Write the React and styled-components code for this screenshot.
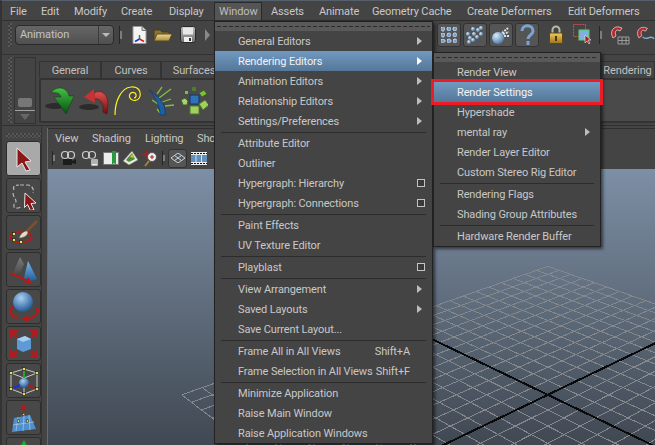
import React from 'react'
import styled, { createGlobalStyle, css } from 'styled-components'

const Global = createGlobalStyle`
  html, body { margin: 0; padding: 0; background: #444; }
  * { box-sizing: border-box; }
`

const Screen = styled.div`
  position: relative;
  width: 655px;
  height: 445px;
  overflow: hidden;
  display: flex;
  flex-direction: column;
  background: #444;
  border-left: 2px solid #333;
  border-top: 1px solid #55606c;
  font-family: Roboto, "Liberation Sans", Arial, sans-serif;
  font-size: 11px;
  letter-spacing: -0.12px;
  color: #c8c8c8;
`

const MenuBar = styled.div`
  height: 20px;
  flex: none;
  display: flex;
  align-items: center;
  padding-left: 8px;
  border-bottom: 1px solid #2f2f2f;
`
const MenuTitle = styled.div`
  flex: none;
  width: ${p => p.$w}px;
  height: 18px;
  line-height: 19px;
  white-space: nowrap;
  ${p => p.$open && css`
    background: #555;
    border: 1px solid #2a2a2a;
    border-bottom: 0;
    padding-left: 4px;
    margin-right: 9px;
    line-height: 18px;
    color: #bdbdbd;
  `}
`

const Grip = styled.div`
  flex: none;
  width: ${p => p.$w}px;
  height: ${p => p.$h}px;
  background: repeating-conic-gradient(#585858 0 25%, #3e3e3e 0 50%) 0 0 / 4px 4px;
`

const StatusLine = styled.div`
  height: 34px;
  flex: none;
  display: flex;
  align-items: center;
  padding: 0 0 6px 6px;
  border-bottom: 1px solid #333;
`
const ModeSelect = styled.div`
  width: 99px;
  height: 20px;
  margin-left: 3px;
  flex: none;
  display: flex;
  border: 1px solid #2b2b2b;
  border-radius: 4px;
  background: linear-gradient(#666, #505050);
  color: #c4c4c4;
  line-height: 18px;
  padding-left: 4px;
`
const ModeLabel = styled.span`
  flex: 1;
`
const ModeArrow = styled.span`
  width: 15px;
  border-left: 1px solid #3a3a3a;
  display: flex;
  align-items: center;
  justify-content: center;
  &::after {
    content: "";
    border-left: 4px solid transparent;
    border-right: 4px solid transparent;
    border-top: 4px solid #bbb;
  }
`
const BarHandle = styled.span`
  flex: none;
  width: 3px;
  height: ${p => p.$h || 18}px;
  margin: 0 ${p => p.$mx ?? 5}px;
  background: linear-gradient(#444 0 30%, #7d7d7d 30% 70%, #444 70%);
  border-left: 1px solid #262626;
`
const StatusLeft = styled.div`
  display: flex;
  align-items: center;
`
const StatusRight = styled.div`
  display: flex;
  align-items: center;
  margin-left: auto;
`
const IconSlot = styled.span`
  flex: none;
  display: flex;
  align-items: center;
  justify-content: center;
  margin-left: ${p => p.$ml || 0}px;
  width: ${p => p.$w || 20}px;
  height: ${p => p.$h || 20}px;
  ${p => p.$framed && css`
    border: 1px solid #333;
    border-radius: 3px;
    background: #555;
  `}
`
const MoreArrow = styled.span`
  margin-left: 8px;
  border-top: 6px solid transparent;
  border-bottom: 6px solid transparent;
  border-left: 5px solid #888;
`

const ShelfArea = styled.div`
  height: 71px;
  flex: none;
  display: flex;
  padding: 2px 0 0 6px;
  border-bottom: 1px solid #2f2f2f;
`
const ShelfControl = styled.div`
  width: 22px;
  height: 67px;
  margin-left: 2px;
  flex: none;
  display: flex;
  flex-direction: column;
  align-items: center;
  justify-content: flex-end;
  border: 1px solid #333;
`
const ShelfKnob = styled.div`
  width: 14px;
  height: 9px;
  border-radius: 2px;
  background: #777;
  margin-bottom: 3px;
`
const ShelfDown = styled.div`
  width: 100%;
  height: 13px;
  border-top: 1px solid #a0a0a0;
  display: flex;
  justify-content: center;
  padding-top: 3px;
  &::after {
    content: "";
    height: 0;
    border-left: 5px solid transparent;
    border-right: 5px solid transparent;
    border-top: 6px solid #666;
  }
`
const ShelfMain = styled.div`
  flex: 1;
  min-width: 0;
  margin-left: 3px;
  padding-top: 4px;
`
const TabRow = styled.div`
  display: flex;
  height: 17px;
`
const Tab = styled.div`
  width: ${p => p.$w}px;
  flex: none;
  text-align: center;
  line-height: 17px;
  padding-left: ${p => p.$pl || 0}px;
  border: 1px solid #333;
  border-bottom: 0;
  color: #c0c0c0;
  white-space: nowrap;
  ${p => p.$end && 'margin-left: auto;'}
`
const ShelfIcons = styled.div`
  height: 45px;
  display: flex;
  align-items: center;
  gap: 5px;
  padding-left: 3px;
  border: 2px solid #333;
  border-right: 0;
  border-radius: 3px 0 0 3px;
  background: #4a4a4a;
`

const Body = styled.div`
  flex: 1;
  min-height: 0;
  display: flex;
`
const ToolBox = styled.div`
  width: 40px;
  flex: none;
  padding: 7px 0 0 4px;
  display: flex;
  flex-direction: column;
  gap: 2px;
  border-right: 1px solid #333;
`
const ToolGrip = styled(Grip)`
  margin-bottom: 1px;
`
const ToolButton = styled.div`
  width: 35px;
  height: 35px;
  flex: none;
  display: flex;
  align-items: center;
  justify-content: center;
  border: 1px solid #2e2e2e;
  border-radius: 3px;
  background: ${p => (p.$on ? '#a9a9a9' : '#484848')};
`
const Panel = styled.div`
  flex: 1;
  min-width: 0;
  margin: 2px 0 0 5px;
  display: flex;
  flex-direction: column;
  border-left: 1px solid #6b6b6b;
`
const PanelMenu = styled.div`
  height: 19px;
  flex: none;
  display: flex;
  align-items: center;
  padding: 1px 0 0 7px;
  border-top: 1px solid #2f2f2f;
`
const PanelTitle = styled.span`
  flex: none;
  width: ${p => p.$w}px;
  white-space: nowrap;
`
const PanelBar = styled.div`
  height: 22px;
  flex: none;
  display: flex;
  align-items: center;
  gap: 3px;
  padding-left: 2px;
`
const Viewport = styled.div`
  flex: 1;
  min-height: 0;
  background: linear-gradient(#7d8fa5, #404852);
`
const GridSvg = styled.svg`
  display: block;
  width: 100%;
  height: 100%;
`

/* menus float over the rest of the window */
const Menu = styled.div`
  position: absolute;
  display: flex;
  flex-direction: column;
  background: #444;
  border: 1px solid #222;
  box-shadow: 2px 2px 3px rgba(0, 0, 0, 0.55);
  color: #c8c8c8;
`
const WindowMenu = styled(Menu)`
  left: 212px;
  top: 20px;
  width: 219px;
`
const RenderMenu = styled(Menu)`
  left: 431px;
  top: 51px;
  width: 168px;
`
const TearOff = styled.div`
  height: 9px;
  flex: none;
  padding: 4px 2px 0;
  background: #595959;
  &::after {
    content: "";
    display: block;
    height: 1px;
    background: repeating-linear-gradient(90deg, #2b2b2b 0 4px, transparent 4px 6px);
  }
`
const Row = styled.div`
  position: relative;
  height: 20px;
  flex: none;
  display: flex;
  align-items: center;
  padding: 0 7px 0 23px;
  white-space: nowrap;
  ${p => p.$active && css`
    background: linear-gradient(#7199c0, #557799);
    color: #f2f2f2;
  `}
`
const RowLabel = styled.span`
  flex: 1;
`
const Shortcut = styled.span`
  margin-right: 15px;
`
const SubArrow = styled.span`
  margin-right: 3px;
  border-top: 4px solid transparent;
  border-bottom: 4px solid transparent;
  border-left: 5px solid ${p => (p.$active ? '#fff' : '#bdbdbd')};
`
const OptionBox = styled.span`
  width: 8px;
  height: 8px;
  border: 1px solid #c4c4c4;
  background: #3a3a3a;
`
const Divider = styled.div`
  height: 2px;
  flex: none;
  margin: 0 6px;
  border-bottom: 1px solid #2c2c2c;
  border-top: 1px solid transparent;
`
const Callout = styled.span`
  position: absolute;
  inset: -3px -3px -3px -3px;
  border: 3px solid #ed1c24;
`

const Grad = ({ id, a, b }) => (
  <linearGradient id={id} x1="0" y1="0" x2="0" y2="1">
    <stop offset="0" stopColor={a} />
    <stop offset="1" stopColor={b} />
  </linearGradient>
)

const NewSceneIcon = () => (
  <svg width="15" height="18" viewBox="0 0 15 18">
    <path d="M1 0.5h9l4 4v13H1z" fill="#f4f4f4" stroke="#999" />
    <path d="M10 0.5v4h4" fill="#ccc" stroke="#777" />
    <path d="M7.5 9v4" stroke="#1a9a2a" strokeWidth="1.5" />
    <path d="M7.5 13L3 15.5" stroke="#2030d0" strokeWidth="1.5" />
    <path d="M7.5 13l4.5 2.5" stroke="#d02020" strokeWidth="1.5" />
  </svg>
)
const FolderIcon = () => (
  <svg width="20" height="16" viewBox="0 0 20 16">
    <defs><Grad id="fold" a="#f0dc96" b="#a88a3e" /></defs>
    <path d="M1 14V3h6l2 2h7v9z" fill="#8a7334" stroke="#4a3c18" />
    <path d="M1 14l3-7h15l-3 7z" fill="url(#fold)" stroke="#5c4a1e" />
  </svg>
)
const SaveIcon = () => (
  <svg width="16" height="17" viewBox="0 0 16 17">
    <defs><Grad id="disk" a="#bcbcbc" b="#707070" /></defs>
    <rect x="0.5" y="0.5" width="15" height="16" rx="2" fill="url(#disk)" stroke="#2a2a2a" />
    <rect x="3" y="1.5" width="10" height="7" fill="#e8e8e8" />
    <rect x="4" y="11" width="8" height="5" fill="#eee" />
    <rect x="9" y="12" width="2" height="3" fill="#333" />
  </svg>
)
const GraphIcon = () => (
  <svg width="20" height="20" viewBox="0 0 20 20" fill="none">
    <rect x="4" y="4" width="12" height="12" stroke="#b5c4d8" strokeDasharray="2 1" />
    <path d="M4 10h12M10 4v12" stroke="#8ea3bd" strokeDasharray="2 1" />
    {[[4, 4], [16, 4], [4, 16], [16, 16], [10, 10], [10, 4], [4, 10], [16, 10], [10, 16]].map(([x, y]) => (
      <rect key={x + '-' + y} x={x - 1.5} y={y - 1.5} width="3" height="3" fill="#6f9fd8" stroke="#dfe8f2" strokeWidth=".5" />
    ))}
  </svg>
)
const ParticlesIcon = () => (
  <svg width="20" height="20" viewBox="0 0 20 20">
    <defs>
      <radialGradient id="ball" cx=".35" cy=".3" r=".8">
        <stop offset="0" stopColor="#dcecfa" />
        <stop offset="1" stopColor="#3f6f9f" />
      </radialGradient>
    </defs>
    {[[5, 13], [9, 9], [13, 5], [16, 3], [3, 9], [8, 4], [12, 12], [16, 9], [8, 15], [4, 17]].map(([x, y]) => (
      <circle key={x + '-' + y} cx={x} cy={y} r="2" fill="url(#ball)" />
    ))}
  </svg>
)
const FluidIcon = () => (
  <svg width="20" height="20" viewBox="0 0 20 20">
    <circle cx="7" cy="13" r="6" fill="url(#ball)" />
    <path d="M11 8l6-5M12 9l6-2M13 11l5 0" stroke="#d7e4f0" strokeWidth="2" strokeDasharray="2 1" />
  </svg>
)
const HelpIcon = () => (
  <svg width="20" height="22" viewBox="0 0 20 22">
    <path d="M5 7c0-7 11-7 11 0 0 4-5 4-5 8M11 17v4" fill="none" stroke="#7aa4d4" strokeWidth="3" />
  </svg>
)
const LockIcon = () => (
  <svg width="14" height="19" viewBox="0 0 14 19">
    <defs><Grad id="lock" a="#f0cc60" b="#9c7418" /></defs>
    <path d="M3.5 8V5a3.5 3.5 0 0 1 7 0v3" fill="none" stroke="#b7b7a8" strokeWidth="2" />
    <rect x="0.5" y="8" width="13" height="10.5" rx="1" fill="url(#lock)" stroke="#5e4610" />
    <rect x="6" y="11" width="2" height="5" fill="#4a3608" />
  </svg>
)
const RegionIcon = () => (
  <svg width="20" height="21" viewBox="0 0 20 21">
    <rect x="0.5" y="0.5" width="12" height="12" fill="none" stroke="#d05050" strokeDasharray="2 1" />
    <rect x="6" y="6" width="10" height="10" fill="#7fb0e0" stroke="#58d060" />
    <path d="M12 11l0 8 2-2 2 3 1-1-2-3 3 0z" fill="#b01c1c" stroke="#eee" strokeWidth=".6" />
  </svg>
)
const MagnetIcon = ({ grid }) => (
  <svg width="20" height="20" viewBox="0 0 20 20" fill="none">
    <path d="M3 13C-1 6 4 1 9 2l3 1-2 3-2-1C5 5 5 8 6 11z" fill="#b52a2a" stroke="#e6e6e6" strokeWidth=".7" />
    {grid ? (
      <path d="M8 12h11v7H8zM12 12v7M16 12v7M8 15.500h11" stroke="#999" />
    ) : (
      <path d="M7 12c4 5 8-3 12 2" stroke="#7fb0e0" strokeWidth="1.500" />
    )}
  </svg>
)
const GreenArrowIcon = () => (
  <svg width="30" height="32" viewBox="0 0 30 32">
    <defs><Grad id="grn" a="#45c045" b="#064f10" /></defs>
    <ellipse cx="11" cy="21" rx="10" ry="3" fill="#2b2b2b" />
    <path d="M7 8C11 1 23 1 25 11h5L22 29 10 12h7C16 8 12 7 7 8z" fill="url(#grn)" stroke="#0a3a0e" strokeWidth=".5" />
  </svg>
)
const RedArrowIcon = () => (
  <svg width="30" height="30" viewBox="0 0 30 30">
    <defs><Grad id="red" a="#e05050" b="#6e0c0c" /></defs>
    <ellipse cx="10" cy="21" rx="10" ry="3" fill="#2b2b2b" />
    <path d="M15 7C22 3 29 8 29 18l-1 10-4-2c1-8-2-14-9-13z" fill="url(#red)" stroke="#4e0a0a" strokeWidth=".5" />
    <path d="M5 11L15 3l1 14z" fill="#c93232" />
  </svg>
)
const CurveIcon = () => (
  <svg width="28" height="30" viewBox="0 0 28 30" fill="none">
    <path d="M1 29C1 15 7 2 17 1c7-1 10 4 9 9-1 5-8 6-10 2-2-4 2-7 5-5 2 2 1 5-1 5" stroke="#fff21a" strokeWidth="1.200" />
  </svg>
)
const HairIcon = () => (
  <svg width="28" height="30" viewBox="0 0 28 30" fill="none">
    <path d="M10 8l5-7M12 12l12-9M15 16l9-3M18 20l9-1M5 14l6 4M10 23l3 4" stroke="#7fbf40" strokeWidth="1.300" />
    <path d="M2 4C8 8 20 16 18 29h-5C13 20 8 10 2 4z" fill="#1f5f9f" stroke="#0d2f5f" strokeWidth=".5" />
  </svg>
)
const CubesIcon = () => (
  <svg width="28" height="30" viewBox="0 0 28 30">
    <rect x="10" y="9" width="9" height="9" fill="#2f72b8" stroke="#16375f" />
    <rect x="10" y="20" width="9" height="8" fill="#9ed05e" stroke="#54752e" />
    <path d="M19 18l6-4 4 5-6 5z" fill="#9ed05e" stroke="#54752e" />
    <path d="M19 7l5-3 3 4-5 3z" fill="#7fbf40" stroke="#3f6020" />
    <rect x="12" y="1" width="4" height="4" fill="#4f7a2e" />
    <path d="M1 14l4-2 3 3-1 4-4 0z" fill="#aad070" stroke="#44602a" />
    <rect x="5" y="5" width="3" height="3" fill="#7fbf40" />
  </svg>
)

const SelectIcon = () => (
  <svg width="24" height="26" viewBox="0 0 24 26">
    <path d="M5 2l14 13-6 1 5 8-4 1-4-8-5 4z" fill="#8a1616" stroke="#e8e8e8" />
  </svg>
)
const LassoIcon = () => (
  <svg width="28" height="28" viewBox="0 0 28 28" fill="none">
    <path d="M10 3h8c5 1 6 5 5 8M4 8C2 4 6 3 9 3M3 11c0 4 3 6 3 8 0 3-3 2-2 6 1 2 5 1 7 0" stroke="#b8b8b8" strokeWidth="1.200" strokeDasharray="4 2" />
    <path d="M15 11l11 10-5 .5 3 6-3.500 1-3-6-3 3z" fill="#8a1616" stroke="#e8e8e8" />
  </svg>
)
const PaintIcon = () => (
  <svg width="28" height="26" viewBox="0 0 28 26" fill="none">
    <ellipse cx="11" cy="17" rx="10.500" ry="5.500" stroke="#b01c1c" strokeWidth="2" />
    <path d="M27 1L16 12" stroke="#7a5230" strokeWidth="2.500" />
    <path d="M17 11c-3 0-6 2-8 7 4 0 8-2 9-5z" fill="#e8dcc0" stroke="#444" strokeWidth=".4" />
    {[[4, 14], [4, 20], [11, 22]].map(([x, y]) => (
      <rect key={x + '-' + y} x={x - 1.500} y={y - 1.500} width="3" height="3" fill="#e8e060" stroke="#111" strokeWidth=".6" />
    ))}
  </svg>
)
const MoveIcon = () => (
  <svg width="30" height="30" viewBox="0 0 30 30">
    <defs>
      <Grad id="cone" a="#7fb8e8" b="#1f5f9f" />
      <Grad id="ghost" a="#7c7c7c" b="#4a4a4a" />
    </defs>
    <path d="M4 18L11 2l4 7-4 10z" fill="url(#ghost)" />
    <path d="M19 6l9 18c-5 3-12 2-13-1z" fill="url(#cone)" />
    <path d="M1 18l20 9" stroke="#b01c1c" strokeWidth="2" />
    <path d="M24 29l-9 0 4-7z" fill="#b01c1c" />
  </svg>
)
const RotateIcon = () => (
  <svg width="30" height="32" viewBox="0 0 30 32" fill="none">
    <defs>
      <radialGradient id="orb" cx=".4" cy=".3" r=".75">
        <stop offset="0" stopColor="#a8d0f4" />
        <stop offset="1" stopColor="#1a4f8c" />
      </radialGradient>
    </defs>
    <circle cx="14" cy="11" r="10" fill="url(#orb)" />
    <path d="M4 15c-5 5-1 10 4 12M28 16c3 7-3 12-13 12" stroke="#b01c1c" strokeWidth="2.500" />
    <path d="M19 24l-7 4 8 3z" fill="#b01c1c" />
  </svg>
)
const ScaleIcon = () => (
  <svg width="30" height="30" viewBox="0 0 30 30">
    <path d="M8 8L4 4M22 8l4-4M8 22l-4 4M22 22l4 4" stroke="#b01c1c" strokeWidth="2.500" />
    <path d="M1 1h9L1 10zM29 1h-9l9 9zM1 29h9L1 20zM29 29h-9l9-9z" fill="#b01c1c" />
    <path d="M8 10l8-3 6 3v10l-8 3-6-3z" fill="#5e9ad6" />
    <path d="M8 10l8-3 6 3-8 3z" fill="#a6cef0" />
  </svg>
)
const ManipIcon = () => (
  <svg width="32" height="32" viewBox="0 0 32 32" fill="none">
    <path d="M3 8l13-4 13 4v16l-13 5-13-5zM3 8l13 5 13-5M16 13v16" stroke="#c8c8c8" />
    <circle cx="16" cy="18" r="5" fill="url(#orb)" />
    <path d="M16 13V6" stroke="#1faa2a" strokeWidth="2" />
    <path d="M12 20l-6 3" stroke="#2030d0" strokeWidth="2" />
    <path d="M20 20l6 3" stroke="#b01c1c" strokeWidth="2" />
    {[[3, 8], [16, 4], [29, 8], [3, 24], [29, 24], [16, 29]].map(([x, y]) => (
      <rect key={x + '-' + y} x={x - 1.500} y={y - 1.500} width="3" height="3" fill="#e8e060" stroke="#111" strokeWidth=".6" />
    ))}
  </svg>
)
const SoftIcon = () => (
  <svg width="30" height="30" viewBox="0 0 30 30">
    <path d="M5 15l16-3 6 14-24 3z" fill="#4f8fcc" />
    <path d="M9 14l-2 14M15 13l-1 15M20 12l1 15M4 22l21-3" stroke="#a6cef0" strokeWidth=".7" />
    <path d="M14.500 11V5" stroke="#b01c1c" strokeWidth="1.500" />
    <path d="M14.500 0l-3 6h6z" fill="#b01c1c" />
    {[[14.500, 11.500], [9.500, 18], [18.500, 18]].map(([x, y]) => (
      <rect key={x + '-' + y} x={x - 1.200} y={y - 1.200} width="2.400" height="2.400" fill="#e8e060" stroke="#111" strokeWidth=".5" />
    ))}
  </svg>
)
const GreenTipIcon = () => (
  <svg width="30" height="30" viewBox="0 0 30 30">
    <path d="M15 0l-4 7h8z" fill="#1faa2a" />
  </svg>
)

const CameraIcon = ({ list }) => (
  <svg width="18" height="17" viewBox="0 0 18 17" fill="none">
    <circle cx="5" cy="5" r="3.500" stroke="#ccc" strokeWidth="1.200" />
    <circle cx="11" cy="5" r="3.500" stroke="#ccc" strokeWidth="1.200" />
    {list ? (
      <path d="M10 9h7v7h-7zM11 11h5M11 13h5" fill="#eee" stroke="#555" strokeWidth=".8" />
    ) : (
      <path d="M3 9h9v6H3zM12 11l4-2v5l-4-1z" fill="#1c1c1c" />
    )}
  </svg>
)
const BookmarkIcon = () => (
  <svg width="16" height="15" viewBox="0 0 16 15">
    <rect x="0.500" y="1.500" width="15" height="12" fill="#ececec" stroke="#777" />
    <path d="M9 0h4v14l-2-2-2 2z" fill="#2a9a40" />
  </svg>
)
const PlaneIcon = () => (
  <svg width="17" height="16" viewBox="0 0 17 16">
    <path d="M1 11l9-10 6 9-9 5z" fill="#e8e8e0" stroke="#666" strokeWidth=".5" />
    <path d="M4 10l6-7 3 6-6 3z" fill="#4a8a3a" />
    <path d="M8 7l2-3 2 4z" fill="#d8c030" />
  </svg>
)
const ZoomIcon = () => (
  <svg width="17" height="17" viewBox="0 0 17 17" fill="none">
    <path d="M4 0v8M0 4h8" stroke="#b01c1c" strokeWidth="1.500" />
    <circle cx="10" cy="7" r="4.500" fill="#eee" stroke="#555" />
    <path d="M10 5v4M8 7h4" stroke="#b01c1c" />
    <path d="M7 11l-4 5" stroke="#b08030" strokeWidth="2" />
  </svg>
)
const GridToggleIcon = () => (
  <svg width="14" height="10" viewBox="0 0 14 10" fill="none">
    <path d="M7 0l7 5-7 5-7-5zM3.500 2.500l7 5M10.500 2.500l-7 5" stroke="#c8d4e0" />
  </svg>
)
const FilmIcon = () => (
  <svg width="16" height="13" viewBox="0 0 16 13">
    <rect width="16" height="13" fill="#eee" />
    <rect y="3" width="16" height="7" fill="#5f8fbf" />
    <path d="M0 1.500h16M0 11.500h16" stroke="#111" strokeDasharray="2 1" />
    <path d="M5 3v7M10.500 3v7" stroke="#dde" />
  </svg>
)

// ground grid: simple projective map fitted on the corners of the Maya grid
const project = (u, v) => {
  const a = 0.185
  const w = 1 + a * (u + v)
  const x = (499 + a * (u * 1487 + v * -489)) / w
  const y = (225 + a * (u * -249 + v * -249)) / w
  return [x, y]
}
const GroundGrid = () => {
  const steps = Array.from({ length: 25 }, (_, i) => (i - 12) / 12)
  return (
    <GridSvg viewBox="0 0 606 275" preserveAspectRatio="none" shapeRendering="crispEdges">
      {steps.filter(s => s !== 0).map(s => {
        const [x1, y1] = project(s, -1)
        const [x2, y2] = project(s, 1)
        const [x3, y3] = project(-1, s)
        const [x4, y4] = project(1, s)
        return (
          <g key={s} stroke="#84878b">
            <line x1={x1} y1={y1} x2={x2} y2={y2} />
            <line x1={x3} y1={y3} x2={x4} y2={y4} />
          </g>
        )
      })}
      <g stroke="#0a0a0a" strokeWidth="2">
        <line x1={project(0, -1)[0]} y1={project(0, -1)[1]} x2={project(0, 1)[0]} y2={project(0, 1)[1]} />
        <line x1={project(-1, 0)[0]} y1={project(-1, 0)[1]} x2={project(1, 0)[0]} y2={project(1, 0)[1]} />
      </g>
    </GridSvg>
  )
}

const windowItems = [
  { label: 'General Editors', arrow: true },
  { label: 'Rendering Editors', arrow: true, active: true },
  { label: 'Animation Editors', arrow: true },
  { label: 'Relationship Editors', arrow: true },
  { label: 'Settings/Preferences', arrow: true },
  null,
  { label: 'Attribute Editor' },
  { label: 'Outliner' },
  { label: 'Hypergraph: Hierarchy', box: true },
  { label: 'Hypergraph: Connections', box: true },
  null,
  { label: 'Paint Effects' },
  { label: 'UV Texture Editor' },
  null,
  { label: 'Playblast', box: true },
  null,
  { label: 'View Arrangement', arrow: true },
  { label: 'Saved Layouts', arrow: true },
  { label: 'Save Current Layout...' },
  null,
  { label: 'Frame All in All Views', shortcut: 'Shift+A' },
  { label: 'Frame Selection in All Views', shortcut: 'Shift+F' },
  null,
  { label: 'Minimize Application' },
  { label: 'Raise Main Window' },
  { label: 'Raise Application Windows' },
]

const renderItems = [
  { label: 'Render View' },
  { label: 'Render Settings', active: true, callout: true },
  { label: 'Hypershade' },
  { label: 'mental ray', arrow: true },
  { label: 'Render Layer Editor' },
  { label: 'Custom Stereo Rig Editor' },
  null,
  { label: 'Rendering Flags' },
  { label: 'Shading Group Attributes' },
  null,
  { label: 'Hardware Render Buffer' },
]

const MenuRows = ({ items }) => (
  <>
    <TearOff />
    {items.map((item, i) =>
      item ? (
        <Row key={item.label} $active={item.active}>
          <RowLabel>{item.label}</RowLabel>
          {item.shortcut && <Shortcut>{item.shortcut}</Shortcut>}
          {item.arrow && <SubArrow $active={item.active} />}
          {item.box && <OptionBox />}
          {item.callout && <Callout />}
        </Row>
      ) : (
        <Divider key={'sep' + i} />
      )
    )}
  </>
)

const topMenus = [
  ['File', 31], ['Edit', 33], ['Modify', 47], ['Create', 48], ['Display', 45],
  ['Window', 48], ['Assets', 48], ['Animate', 53], ['Geometry Cache', 95],
  ['Create Deformers', 101], ['Edit Deformers', 80],
]

const toolIcons = [
  SelectIcon, LassoIcon, PaintIcon, MoveIcon, RotateIcon,
  ScaleIcon, ManipIcon, SoftIcon, GreenTipIcon,
]

export default function App() {
  return (
    <Screen>
      <Global />
      <MenuBar>
        {topMenus.map(([name, w]) => (
          <MenuTitle key={name} $w={w} $open={name === 'Window'}>{name}</MenuTitle>
        ))}
      </MenuBar>

      <StatusLine>
        <StatusLeft>
          <Grip $w={4} $h={24} />
          <ModeSelect>
            <ModeLabel>Animation</ModeLabel>
            <ModeArrow />
          </ModeSelect>
          <BarHandle />
          <IconSlot $ml={4} $w={16}><NewSceneIcon /></IconSlot>
          <IconSlot $ml={6}><FolderIcon /></IconSlot>
          <IconSlot $ml={6} $w={18}><SaveIcon /></IconSlot>
          <MoreArrow />
        </StatusLeft>
        <StatusRight>
          <IconSlot $framed $w={24} $h={24}><GraphIcon /></IconSlot>
          <IconSlot $framed $ml={2} $w={24} $h={24}><ParticlesIcon /></IconSlot>
          <IconSlot $framed $ml={2} $w={24} $h={24}><FluidIcon /></IconSlot>
          <IconSlot $framed $ml={2} $w={24} $h={24}><HelpIcon /></IconSlot>
          <IconSlot $ml={9} $w={16} $h={22}><LockIcon /></IconSlot>
          <IconSlot $ml={9} $w={20} $h={22}><RegionIcon /></IconSlot>
          <BarHandle $mx={6} />
          <IconSlot $ml={2} $w={20}><MagnetIcon grid /></IconSlot>
          <IconSlot $ml={6} $w={19}><MagnetIcon /></IconSlot>
        </StatusRight>
      </StatusLine>

      <ShelfArea>
        <Grip $w={4} $h={66} />
        <ShelfControl>
          <ShelfKnob />
          <ShelfDown />
        </ShelfControl>
        <ShelfMain>
          <TabRow>
            <Tab $w={62}>General</Tab>
            <Tab $w={60}>Curves</Tab>
            <Tab $w={60} $pl={6}>Surfaces</Tab>
            <Tab $w={55} $end>Rendering</Tab>
          </TabRow>
          <ShelfIcons>
            <GreenArrowIcon />
            <RedArrowIcon />
            <CurveIcon />
            <HairIcon />
            <CubesIcon />
          </ShelfIcons>
        </ShelfMain>
      </ShelfArea>

      <Body>
        <ToolBox>
          <ToolGrip $w={35} $h={5} />
          {toolIcons.map((Icon, i) => (
            <ToolButton key={i} $on={i === 0}><Icon /></ToolButton>
          ))}
        </ToolBox>
        <Panel>
          <PanelMenu>
            <PanelTitle $w={37}>View</PanelTitle>
            <PanelTitle $w={53}>Shading</PanelTitle>
            <PanelTitle $w={52}>Lighting</PanelTitle>
            <PanelTitle $w={30}>Show</PanelTitle>
          </PanelMenu>
          <PanelBar>
            <BarHandle $mx={2} $h={14} />
            <IconSlot $w={18}><CameraIcon /></IconSlot>
            <IconSlot $w={18}><CameraIcon list /></IconSlot>
            <IconSlot $w={17}><BookmarkIcon /></IconSlot>
            <IconSlot $w={17}><PlaneIcon /></IconSlot>
            <IconSlot $w={17}><ZoomIcon /></IconSlot>
            <BarHandle $mx={0} $h={14} />
            <IconSlot $framed $w={19} $h={19}><GridToggleIcon /></IconSlot>
            <IconSlot $w={17}><FilmIcon /></IconSlot>
          </PanelBar>
          <Viewport>
            <GroundGrid />
          </Viewport>
        </Panel>
      </Body>

      <WindowMenu><MenuRows items={windowItems} /></WindowMenu>
      <RenderMenu><MenuRows items={renderItems} /></RenderMenu>
    </Screen>
  )
}
